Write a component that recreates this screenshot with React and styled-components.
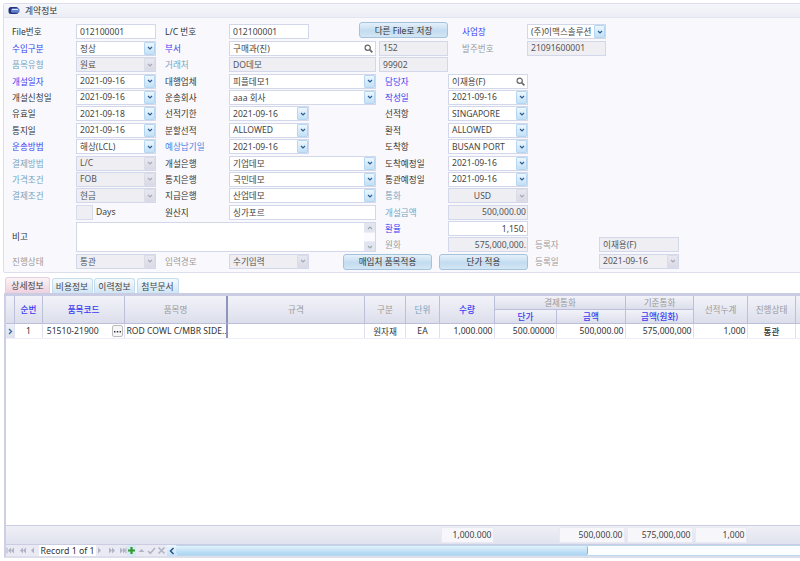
import React from 'react';
import styled, { createGlobalStyle } from 'styled-components';

const Global = createGlobalStyle`
  html, body { margin: 0; padding: 0; background: #fff; }
  body { font-family: "Noto Sans", "Noto Sans CJK KR", sans-serif; font-size: 8.6px; color: #333; }
  * { box-sizing: border-box; }
`;

const Page = styled.div`
  width: 800px; height: 561px; overflow: hidden; display: flex; flex-direction: column; background: #fff;
`;
const Panel = styled.section`
  margin: 3px -4px 0 3px; height: 270px; border: 1px solid #dcdeec; border-radius: 2px; background: #f9f9fd; flex: none;
`;
const PanelHead = styled.header`
  height: 14px; display: flex; align-items: center; gap: 5px; padding-left: 4px;
  background: linear-gradient(#f5f6fa, #eceef5); border-bottom: 1px solid #e2e4f0; color: #333; font-size: 8.8px;
`;
const FormGrid = styled.div`
  display: grid; padding: 6.4px 0 0 8px;
  grid-template-columns: [l1] 64px [f1] 80px [e1] 9px [l2] 64px [f2] 80px [e2] 34px [b1] 16px [s1] 17px [e2w] 3px [g] 6px [l3] 47px [be] 7px [b2] 9px [f3] 14px [l4] 65px [f4] 1px [e3] 7px [l5] 64px [f5] 7px [e4] 73px [e5] 1fr;
  grid-auto-rows: 16.4px;
`;
const toneColors = { dark: '#333', blue: '#3c3cf0', sky: '#4a80e4', teal: '#76a4c0', gray: '#9a9a9a' };
const Label = styled.div`
  grid-row: ${p => p.$r}; grid-column: ${p => p.$from} / span 1; height: 15px; display: flex; align-items: center;
  white-space: nowrap; color: ${p => toneColors[p.$tone]};
`;
const MemoLabel = styled.div`
  grid-row: 13 / span 2; grid-column: l1 / f1; height: 30px; display: flex; align-items: center; color: #333;
`;
const FieldBox = styled.div`
  grid-row: ${p => p.$r}; grid-column: ${p => p.$from} / ${p => p.$to}; height: 15px; display: flex; align-items: center;
  border: 1px solid #d3d7ea; background: ${p => (p.$ro ? '#eeeef3' : '#fff')}; overflow: hidden;
`;
const FieldText = styled.span`
  flex: 1; min-width: 0; padding: 0 ${p => (p.$align === 'right' ? '1px' : '3px')}; white-space: nowrap; overflow: hidden;
  text-align: ${p => p.$align || 'left'}; color: ${p => (p.$ro ? '#555' : '#444')};
`;
const DropBtn = styled.span`
  flex: none; width: 11px; height: 13px; display: flex; align-items: center; justify-content: center; border-radius: 1px;
  border: 1px solid ${p => (p.$ro ? '#dcdce8' : '#b4d6f0')};
  background: ${p => (p.$ro ? 'linear-gradient(#e8e8f0, #dadae6)' : 'linear-gradient(#eef7fd, #c2e0f6)')};
  color: ${p => (p.$ro ? '#a8a8b8' : '#2a5c98')};
`;
const SearchBtn = styled.span`
  flex: none; width: 13px; display: flex; align-items: center; justify-content: center; color: #666;
`;
const DaysCell = styled.div`
  grid-row: ${p => p.$r}; grid-column: f1 / e1; height: 15px; display: flex; align-items: center; gap: 3px; color: #444;
`;
const SmallBox = styled.span`
  width: 17px; height: 15px; background: #eeeef3; border: 1px solid #d8dbec;
`;
const Memo = styled.div`
  grid-row: 13 / span 2; grid-column: f1 / e2w; height: 30px; margin-top: 1px; display: flex; justify-content: flex-end;
  background: #fff; border: 1px solid #d3d7ea;
`;
const MemoBar = styled.div`
  width: 11px; display: flex; flex-direction: column; justify-content: space-between; background: #eceef6;
`;
const MemoArrow = styled.span`
  height: 9px; display: flex; align-items: center; justify-content: center; color: #9aa; background: #e2e5f0;
`;
const MemoThumb = styled.span`
  height: 8px; background: #fbfbff;
`;
const ActionBtn = styled.button`
  grid-row: ${p => p.$r}; grid-column: ${p => p.$from} / ${p => p.$to}; height: 16px; margin-top: ${p => p.$mt || 0}px; padding: 0;
  font: inherit; color: #333; border: 1px solid #a4c2dc; border-radius: 3px;
  background: linear-gradient(#e6f1fa, #c2dcef 55%, #d4e6f4);
`;
const TabBar = styled.nav`
  margin: 4px 0 0 5px; height: 16px; display: flex; gap: 1.5px; align-items: flex-end; flex: none;
`;
const Tab = styled.div`
  height: ${p => (p.$on ? 16 : 15)}px; width: ${p => p.$w}px; display: flex; align-items: center; justify-content: center; font-size: 8.8px;
  color: #444; border: 1px solid ${p => (p.$on ? '#e4d0dc' : '#c4dcec')}; border-bottom: 0; border-radius: 3px 3px 0 0;
  background: ${p => (p.$on ? 'linear-gradient(#fbf4f7, #eed0de)' : 'linear-gradient(#f6fbfe, #cfe6f6)')};
`;
const GridFrame = styled.section`
  flex: 1; margin: 0 -20px 3px 4px; min-height: 0; display: flex; flex-direction: column;
  border-left: 2px solid #cdd0e4; border-top: 3px solid #c9cce2; border-bottom: 2px solid #dcdeec; background: #fff;
`;
const cols = '9px 28px 82px 103px 137px 41px 34px 55px 62px 69px 68px 54px 48px 40px';
const HeadGrid = styled.div`
  display: grid; grid-template-columns: ${cols}; grid-template-rows: 14px 14px; flex: none;
`;
const HeadCell = styled.div`
  grid-column: ${p => p.$c} / span ${p => p.$cs || 1}; grid-row: ${p => p.$r || 1} / span ${p => p.$rs || 2};
  display: flex; align-items: center; justify-content: center; white-space: nowrap;
  color: ${p => toneColors[p.$tone || 'gray']}; font-weight: ${p => (p.$tone === 'blue' ? 500 : 400)};
  background: linear-gradient(#f2f3f9, #dcdeeb);
  border-right: ${p => (p.$thick ? '2px solid #8f94bc' : '1px solid #bcbfda')}; border-bottom: 1px solid #bcbfda;
`;
const DataRow = styled.div`
  display: grid; grid-template-columns: ${cols}; height: 15px; flex: none; border-bottom: 1px solid #eeeefa;
`;
const DataCell = styled.div`
  display: flex; align-items: center; justify-content: ${p => ({ right: 'flex-end', center: 'center' }[p.$a] || 'flex-start')};
  padding: 0 1.5px; white-space: nowrap; overflow: hidden; color: #333; font-weight: ${p => (p.$b ? 500 : 400)};
  border-right: ${p => (p.$thick ? '2px solid #8f94bc' : '1px solid #dfe1f2')};
`;
const Indicator = styled(DataCell)`
  background: linear-gradient(#eef0f7, #dfe1ec); color: #3a6ea8; padding: 0; justify-content: center;
`;
const Ellipsis = styled.span`
  margin-left: auto; width: 11px; height: 12px; border: 1px solid #bbb; border-radius: 2px; background: #f6f6f6;
  display: flex; align-items: center; justify-content: center; color: #333;
`;
const Spacer = styled.div` flex: 1; `;
const SummaryGrid = styled.div`
  display: grid; grid-template-columns: ${cols}; height: 20px; flex: none; align-items: center;
  border-top: 1px solid #c9cce2; border-bottom: 1px solid #c9cce2; background: linear-gradient(#eff0f6, #e0e2ee);
`;
const SumBox = styled.div`
  grid-column: ${p => p.$c}; height: 16px; margin: 0 1px 0 ${p => p.$ml || 1}px; display: flex; align-items: center; justify-content: flex-end;
  padding-right: 1.5px; background: #f7f7fb; border: 1px solid #e8e9f2; color: #444;
`;
const NavBar = styled.div`
  height: 11px; flex: none; display: flex; align-items: center; background: #e9eaf3;
`;
const NavBtn = styled.span`
  width: ${p => p.$w || 9}px; height: 11px; margin-right: ${p => p.$mr || 0}px; flex: none; display: flex; align-items: center; justify-content: center;
  color: ${p => p.$color || '#b0b3c4'}; background: ${p => p.$bg || 'transparent'};
`;
const RecordText = styled.span`
  width: 57px; height: 11px; flex: none; background: #fff; color: #333; padding-left: 1.5px; display: flex; align-items: center; font-size: 8.8px; white-space: nowrap;
`;
const ScrollTrack = styled.div`
  flex: 1; height: 11px; background: #fbfdff; border: 1px solid #bcd8ee; border-left: 0; display: flex;
`;
const ScrollThumb = styled.div`
  width: 412px; background: linear-gradient(#e2f1fb, #a9d5f2); border-right: 1px solid #7fb5de; border-radius: 2px;
`;

const Chev = () => (
  <svg width="6" height="4" viewBox="0 0 6 4"><path d="M1 1l2 2 2-2" fill="none" stroke="currentColor" strokeWidth="1.2" /></svg>
);
const Glass = () => (
  <svg width="9" height="9" viewBox="0 0 9 9"><circle cx="3.7" cy="3.7" r="2.6" fill="none" stroke="currentColor" strokeWidth="1.2" /><path d="M5.6 5.6L8.4 8.4" stroke="currentColor" strokeWidth="1.6" /></svg>
);
const Logo = () => (
  <svg width="12" height="9" viewBox="0 0 12 9"><rect x="0.5" y="1" width="10" height="7" rx="2.5" fill="#24347c" /><rect x="3" y="2.3" width="8.5" height="4.4" rx="1.5" fill="#5f7fcc" /><rect x="4" y="3" width="6" height="1" fill="#dbe6ff" /></svg>
);
const Tri = ({ d = 'l', bars = 0, n = 1 }) => {
  const pts = [];
  for (let i = 0; i < n; i++) {
    const x = 2 + i * 3;
    pts.push(<path key={i} d={d === 'l' ? `M${x + 3} 1.5v6l-3-3z` : `M${x} 1.5v6l3-3z`} fill="currentColor" />);
  }
  return (
    <svg width="9" height="9" viewBox="0 0 9 9">
      {pts}
      {bars === 1 && <rect x={d === 'l' ? 0.5 : 7.5} y="1.5" width="1" height="6" fill="currentColor" />}
    </svg>
  );
};

const F = ({ r, from = 'f1', to = 'e1', v, ro, dd, search, align }) => (
  <FieldBox $r={r} $from={from} $to={to} $ro={ro}>
    <FieldText $align={align} $ro={ro}>{v}</FieldText>
    {dd && <DropBtn $ro={ro}><Chev /></DropBtn>}
    {search && <SearchBtn><Glass /></SearchBtn>}
  </FieldBox>
);
const L = ({ r, from = 'l1', t = 'dark', children }) => <Label $r={r} $from={from} $tone={t}>{children}</Label>;

const D = '2021-09-16';

export default function App() {
  return (
    <Page>
      <Global />
      <Panel>
        <PanelHead><Logo />계약정보</PanelHead>
        <FormGrid>
          <L r={1}>File번호</L><F r={1} v="012100001" />
          <L r={1} from="l2">L/C 번호</L><F r={1} from="f2" to="e2" v="012100001" />
          <ActionBtn $r={1} $from="s1" $to="f3" $mt={-2}>다른 File로 저장</ActionBtn>
          <L r={1} from="l4" t="blue">사업장</L><F r={1} from="f4" to="e4" v="(주)이맥스솔루션" dd />

          <L r={2} t="blue">수입구분</L><F r={2} v="정상" dd />
          <L r={2} from="l2" t="blue">부서</L><F r={2} from="f2" to="e2w" v="구매과(진)" search />
          <F r={2} from="g" to="f3" v="152" ro />
          <L r={2} from="l4" t="gray">발주번호</L><F r={2} from="f4" to="e4" v="21091600001" ro />

          <L r={3} t="teal">품목유형</L><F r={3} v="원료" ro dd />
          <L r={3} from="l2" t="teal">거래처</L><F r={3} from="f2" to="e2w" v="DO데모" ro />
          <F r={3} from="g" to="f3" v="99902" ro />

          <L r={4} t="blue">개설일자</L><F r={4} v={D} dd />
          <L r={4} from="l2">대행업체</L><F r={4} from="f2" to="e2w" v="피플데모1" dd />
          <L r={4} from="l3" t="blue">담당자</L><F r={4} from="f3" to="e3" v="이재용(F)" search />

          <L r={5}>개설신청일</L><F r={5} v={D} dd />
          <L r={5} from="l2">운송회사</L><F r={5} from="f2" to="e2w" v="aaa 회사" dd />
          <L r={5} from="l3" t="blue">작성일</L><F r={5} from="f3" to="e3" v={D} dd />

          <L r={6}>유효일</L><F r={6} v="2021-09-18" dd />
          <L r={6} from="l2">선적기한</L><F r={6} from="f2" to="e2" v={D} dd />
          <L r={6} from="l3">선적항</L><F r={6} from="f3" to="e3" v="SINGAPORE" dd />

          <L r={7}>통지일</L><F r={7} v={D} dd />
          <L r={7} from="l2">분할선적</L><F r={7} from="f2" to="e2" v="ALLOWED" dd />
          <L r={7} from="l3">환적</L><F r={7} from="f3" to="e3" v="ALLOWED" dd />

          <L r={8} t="blue">운송방법</L><F r={8} v="해상(LCL)" dd />
          <L r={8} from="l2" t="sky">예상납기일</L><F r={8} from="f2" to="e2" v={D} dd />
          <L r={8} from="l3">도착항</L><F r={8} from="f3" to="e3" v="BUSAN PORT" dd />

          <L r={9} t="teal">결제방법</L><F r={9} v="L/C" ro dd />
          <L r={9} from="l2">개설은행</L><F r={9} from="f2" to="e2w" v="기업데모" dd />
          <L r={9} from="l3">도착예정일</L><F r={9} from="f3" to="e3" v={D} dd />

          <L r={10} t="teal">가격조건</L><F r={10} v="FOB" ro dd />
          <L r={10} from="l2">통지은행</L><F r={10} from="f2" to="e2w" v="국민데모" dd />
          <L r={10} from="l3">통관예정일</L><F r={10} from="f3" to="e3" v={D} dd />

          <L r={11} t="teal">결제조건</L><F r={11} v="현금" ro dd />
          <L r={11} from="l2">지급은행</L><F r={11} from="f2" to="e2w" v="산업데모" dd />
          <L r={11} from="l3" t="teal">통화</L><F r={11} from="f3" to="e3" v="USD" ro dd align="center" />

          <DaysCell $r={12}><SmallBox />Days</DaysCell>
          <L r={12} from="l2">원산지</L><F r={12} from="f2" to="e2w" v="싱가포르" />
          <L r={12} from="l3" t="teal">개설금액</L><F r={12} from="f3" to="e3" v="500,000.00" ro align="right" />

          <MemoLabel>비고</MemoLabel>
          <Memo>
            <MemoBar>
              <MemoArrow><svg width="6" height="4" viewBox="0 0 6 4"><path d="M1 3l2-2 2 2" fill="none" stroke="currentColor" strokeWidth="1.2" /></svg></MemoArrow>
              <MemoThumb />
              <MemoArrow><Chev /></MemoArrow>
            </MemoBar>
          </Memo>
          <L r={13} from="l3" t="blue">환율</L><F r={13} from="f3" to="e3" v="1,150." align="right" />

          <L r={14} from="l3" t="gray">원화</L><F r={14} from="f3" to="e3" v="575,000,000." ro align="right" />
          <L r={14} from="l5" t="gray">등록자</L><F r={14} from="f5" to="e5" v="이재용(F)" ro />

          <L r={15} t="gray">진행상태</L><F r={15} v="통관" ro dd />
          <L r={15} from="l2" t="gray">입력경로</L><F r={15} from="f2" to="e2" v="수기입력" ro dd />
          <ActionBtn $r={15} $from="b1" $to="be">매입처 품목적용</ActionBtn>
          <ActionBtn $r={15} $from="b2" $to="e3">단가 적용</ActionBtn>
          <L r={15} from="l5" t="gray">등록일</L><F r={15} from="f5" to="e5" v={D} ro dd />
        </FormGrid>
      </Panel>

      <TabBar>
        <Tab $on $w={45}>상세정보</Tab>
        <Tab $w={41}>비용정보</Tab>
        <Tab $w={41}>이력정보</Tab>
        <Tab $w={42}>첨부문서</Tab>
      </TabBar>

      <GridFrame>
        <HeadGrid>
          <HeadCell $c={1} />
          <HeadCell $c={2} $tone="blue">순번</HeadCell>
          <HeadCell $c={3} $tone="blue">품목코드</HeadCell>
          <HeadCell $c={4} $thick>품목명</HeadCell>
          <HeadCell $c={5}>규격</HeadCell>
          <HeadCell $c={6}>구분</HeadCell>
          <HeadCell $c={7} $tone="teal">단위</HeadCell>
          <HeadCell $c={8} $tone="blue">수량</HeadCell>
          <HeadCell $c={9} $cs={2} $rs={1}>결제통화</HeadCell>
          <HeadCell $c={9} $r={2} $rs={1} $tone="blue">단가</HeadCell>
          <HeadCell $c={10} $r={2} $rs={1} $tone="blue">금액</HeadCell>
          <HeadCell $c={11} $rs={1}>기준통화</HeadCell>
          <HeadCell $c={11} $r={2} $rs={1} $tone="blue">금액(원화)</HeadCell>
          <HeadCell $c={12}>선적누계</HeadCell>
          <HeadCell $c={13}>진행상태</HeadCell>
          <HeadCell $c={14} />
        </HeadGrid>
        <DataRow>
          <Indicator><svg width="5" height="7" viewBox="0 0 5 7"><path d="M1 1l2.5 2.5L1 6" fill="none" stroke="currentColor" strokeWidth="1.4" /></svg></Indicator>
          <DataCell $a="center">1</DataCell>
          <DataCell>&nbsp;51510-21900<Ellipsis><svg width="7" height="3" viewBox="0 0 7 3"><path d="M0 1h1.4v1.4H0zM2.8 1h1.4v1.4H2.8zM5.6 1H7v1.4H5.6z" fill="currentColor" /></svg></Ellipsis></DataCell>
          <DataCell $thick>ROD COWL C/MBR SIDE...</DataCell>
          <DataCell />
          <DataCell $a="center">원자재</DataCell>
          <DataCell $a="center">EA</DataCell>
          <DataCell $a="right">1,000.000</DataCell>
          <DataCell $a="right">500.00000</DataCell>
          <DataCell $a="right">500,000.00</DataCell>
          <DataCell $a="right">575,000,000</DataCell>
          <DataCell $a="right">1,000</DataCell>
          <DataCell $a="center" $b>통관</DataCell>
          <DataCell />
        </DataRow>
        <Spacer />
        <SummaryGrid>
          <SumBox $c={8}>1,000.000</SumBox>
          <SumBox $c={10} $ml={2}>500,000.00</SumBox>
          <SumBox $c={11}>575,000,000</SumBox>
          <SumBox $c={12}>1,000</SumBox>
        </SummaryGrid>
        <NavBar>
          <NavBtn $mr={3}><Tri n={2} bars={1} /></NavBtn>
          <NavBtn $mr={2}><Tri n={2} /></NavBtn>
          <NavBtn $mr={1}><Tri /></NavBtn>
          <RecordText>Record 1 of 1</RecordText>
          <NavBtn $mr={2}><Tri d="r" /></NavBtn>
          <NavBtn $mr={2}><Tri d="r" n={2} /></NavBtn>
          <NavBtn><Tri d="r" n={2} bars={1} /></NavBtn>
          <NavBtn $color="#2f9a2f" $bg="#d6e9f6" $mr={1}><svg width="9" height="9" viewBox="0 0 9 9"><path d="M4.5 1v7M1 4.5h7" stroke="currentColor" strokeWidth="2.2" /></svg></NavBtn>
          <NavBtn $mr={1}><svg width="9" height="9" viewBox="0 0 9 9"><path d="M1.5 6l3-3 3 3z" fill="currentColor" /></svg></NavBtn>
          <NavBtn $mr={1}><svg width="9" height="9" viewBox="0 0 9 9"><path d="M1 5l2.3 2.3L8 2" fill="none" stroke="currentColor" strokeWidth="1.5" /></svg></NavBtn>
          <NavBtn $mr={1}><svg width="9" height="9" viewBox="0 0 9 9"><path d="M1.5 1.5l6 6M7.5 1.5l-6 6" stroke="currentColor" strokeWidth="1.6" /></svg></NavBtn>
          <NavBtn $color="#24528c" $bg="linear-gradient(#edf6fd, #c4e0f5)"><svg width="6" height="8" viewBox="0 0 6 8"><path d="M4.5 1L1.5 4l3 3" fill="none" stroke="currentColor" strokeWidth="1.5" /></svg></NavBtn>
          <ScrollTrack><ScrollThumb /></ScrollTrack>
        </NavBar>
      </GridFrame>
    </Page>
  );
}
